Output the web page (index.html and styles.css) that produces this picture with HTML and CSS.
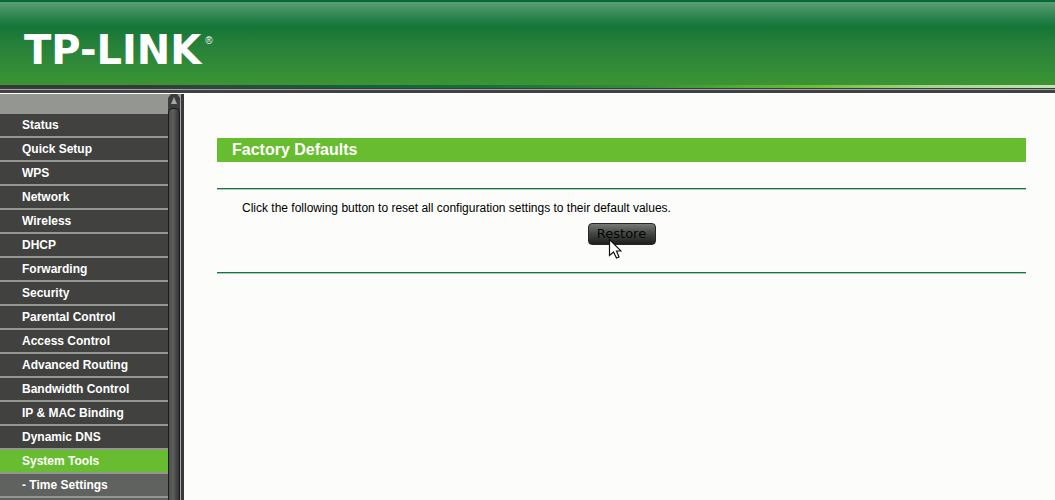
FILE: index.html
```html
<!DOCTYPE html>
<html lang="en">
<head>
<meta charset="utf-8">
<title>TP-LINK</title>
<link rel="stylesheet" href="styles.css">
</head>
<body>
<header class="banner">
  <div class="logo"><span class="logo-name">TP-LINK</span><span class="logo-mark">®</span></div>
</header>
<div class="strip"></div>
<div class="rule"></div>
<div class="frames">
  <nav class="sidebar">
    <ul class="menu">
      <li><a href="#">Status</a></li>
      <li><a href="#">Quick Setup</a></li>
      <li><a href="#">WPS</a></li>
      <li><a href="#">Network</a></li>
      <li><a href="#">Wireless</a></li>
      <li><a href="#">DHCP</a></li>
      <li><a href="#">Forwarding</a></li>
      <li><a href="#">Security</a></li>
      <li><a href="#">Parental Control</a></li>
      <li><a href="#">Access Control</a></li>
      <li><a href="#">Advanced Routing</a></li>
      <li><a href="#">Bandwidth Control</a></li>
      <li><a href="#">IP &amp; MAC Binding</a></li>
      <li><a href="#">Dynamic DNS</a></li>
      <li><a class="active" href="#">System Tools</a></li>
      <li><a class="sub" href="#">- Time Settings</a></li>
      <li class="tail"></li>
    </ul>
    <div class="scrollbar">
      <svg class="arrow" width="12" height="14" viewBox="0 0 12 14" aria-hidden="true"><path d="M0 0h3L0 4zM12 0H9l3 4z" fill="#949692"/><path d="M6 3L9 10H3z" fill="#a5a7a5"/></svg>
      <div class="thumb"></div>
    </div>
  </nav>
  <div class="divider"></div>
  <main class="content">
    <h1 class="title">Factory Defaults</h1>
    <hr class="line">
    <form class="panel">
      <p class="note">Click the following button to reset all configuration settings to their default values.</p>
      <div class="actions">
        <div class="button-wrap">
          <button class="restore" type="button">Restore</button>
          <svg class="cursor" width="14" height="22" viewBox="0 0 14 22" aria-hidden="true"><path d="M1.500 1.500V17.500L5.500 14L8.500 20L11 19L8.500 13H13z" fill="#fff" stroke="#111" stroke-width="1.200"/></svg>
        </div>
      </div>
    </form>
    <hr class="line">
  </main>
</div>
</body>
</html>
```

FILE: styles.css
```css
* {
  box-sizing: border-box;
}

body {
  margin: 0;
  height: 100vh;
  display: flex;
  flex-direction: column;
  overflow: hidden;
  background: #fcfdfa;
  font-family: "Liberation Sans", Arial, sans-serif;
  font-size: 12px;
}

.banner {
  flex: none;
  height: 85px;
  padding: 28px 24px 0;
  border-top: 2px solid #086836;
  background: linear-gradient(#5b9f76 0, #358856 12px, #147636 25px, #26803a 42px, #3c9433 100%);
}

.logo {
  display: flex;
  align-items: flex-start;
  gap: 4px;
  color: #fff;
}

.logo-name {
  font: bold 40px/40px "DejaVu Sans", sans-serif;
}

.logo-mark {
  margin-top: 6px;
  font-size: 10px;
  line-height: 10px;
}

.strip {
  flex: none;
  height: 3px;
  background: linear-gradient(90deg, #393939 0, #353838 12%, #2a4a3b 20%, #14603a 32%, #12703a 45%, #359237 62%, #6cbe35 77%, #a2d58a 88%, #c3e4b3 100%);
}

.rule {
  flex: none;
  height: 5px;
  background: linear-gradient(#3a3c3e 0 1px, #a3a5a5 1px 2px, #414244 2px);
}

.frames {
  flex: 1;
  min-height: 0;
  display: flex;
  border-top: 1px solid #fff;
}

.sidebar {
  flex: none;
  width: 180px;
  display: flex;
  background: #949692;
}

.menu {
  flex: 1;
  margin: 0;
  padding: 20px 0 0;
  list-style: none;
}

.menu a {
  display: block;
  margin-bottom: 2px;
  padding-left: 22px;
  background: #41423f;
  color: #fff;
  font-weight: bold;
  line-height: 22px;
  text-decoration: none;
}

.menu .active {
  background: #68bc30;
}

.menu .sub,
.tail {
  background: #60625f;
}

.tail {
  height: 22px;
}

.scrollbar {
  flex: none;
  width: 12px;
  display: flex;
  flex-direction: column;
  background: #3c3c3e;
}

.arrow {
  flex: none;
}

.thumb {
  flex: 1;
  border: 1px solid #1d1d20;
  border-bottom: 0;
  border-radius: 5px 5px 0 0;
  background: linear-gradient(90deg, #4c4d4c, #5d5f5c 40%, #323235);
}

.divider {
  flex: none;
  width: 4px;
  background: linear-gradient(90deg, #a4a6a4 0 1px, #39393d 1px);
}

.content {
  flex: 1;
  padding: 44px 29px 0 33px;
}

.title {
  margin: 0 0 26px;
  padding-left: 15px;
  background: #68bc30;
  color: #fff;
  font-size: 16px;
  line-height: 24px;
}

.line {
  height: 2px;
  margin: 0;
  border: 0;
  border-top: 1px solid #17743f;
  background: #a6cbb6;
}

.panel {
  padding: 10px 0 27px;
}

.note {
  margin: 0 0 7px 25px;
  line-height: 16px;
}

.actions {
  display: flex;
  justify-content: center;
}

.button-wrap {
  position: relative;
}

.restore {
  display: block;
  width: 68px;
  height: 22px;
  padding: 0;
  border: 1px solid #252725;
  border-radius: 4px;
  background: linear-gradient(#777977, #424442 50%, #1d1f1d);
  color: #050505;
  font: 13px/20px "DejaVu Sans", sans-serif;
}

.cursor {
  position: absolute;
  left: 20px;
  top: 15px;
}
```
